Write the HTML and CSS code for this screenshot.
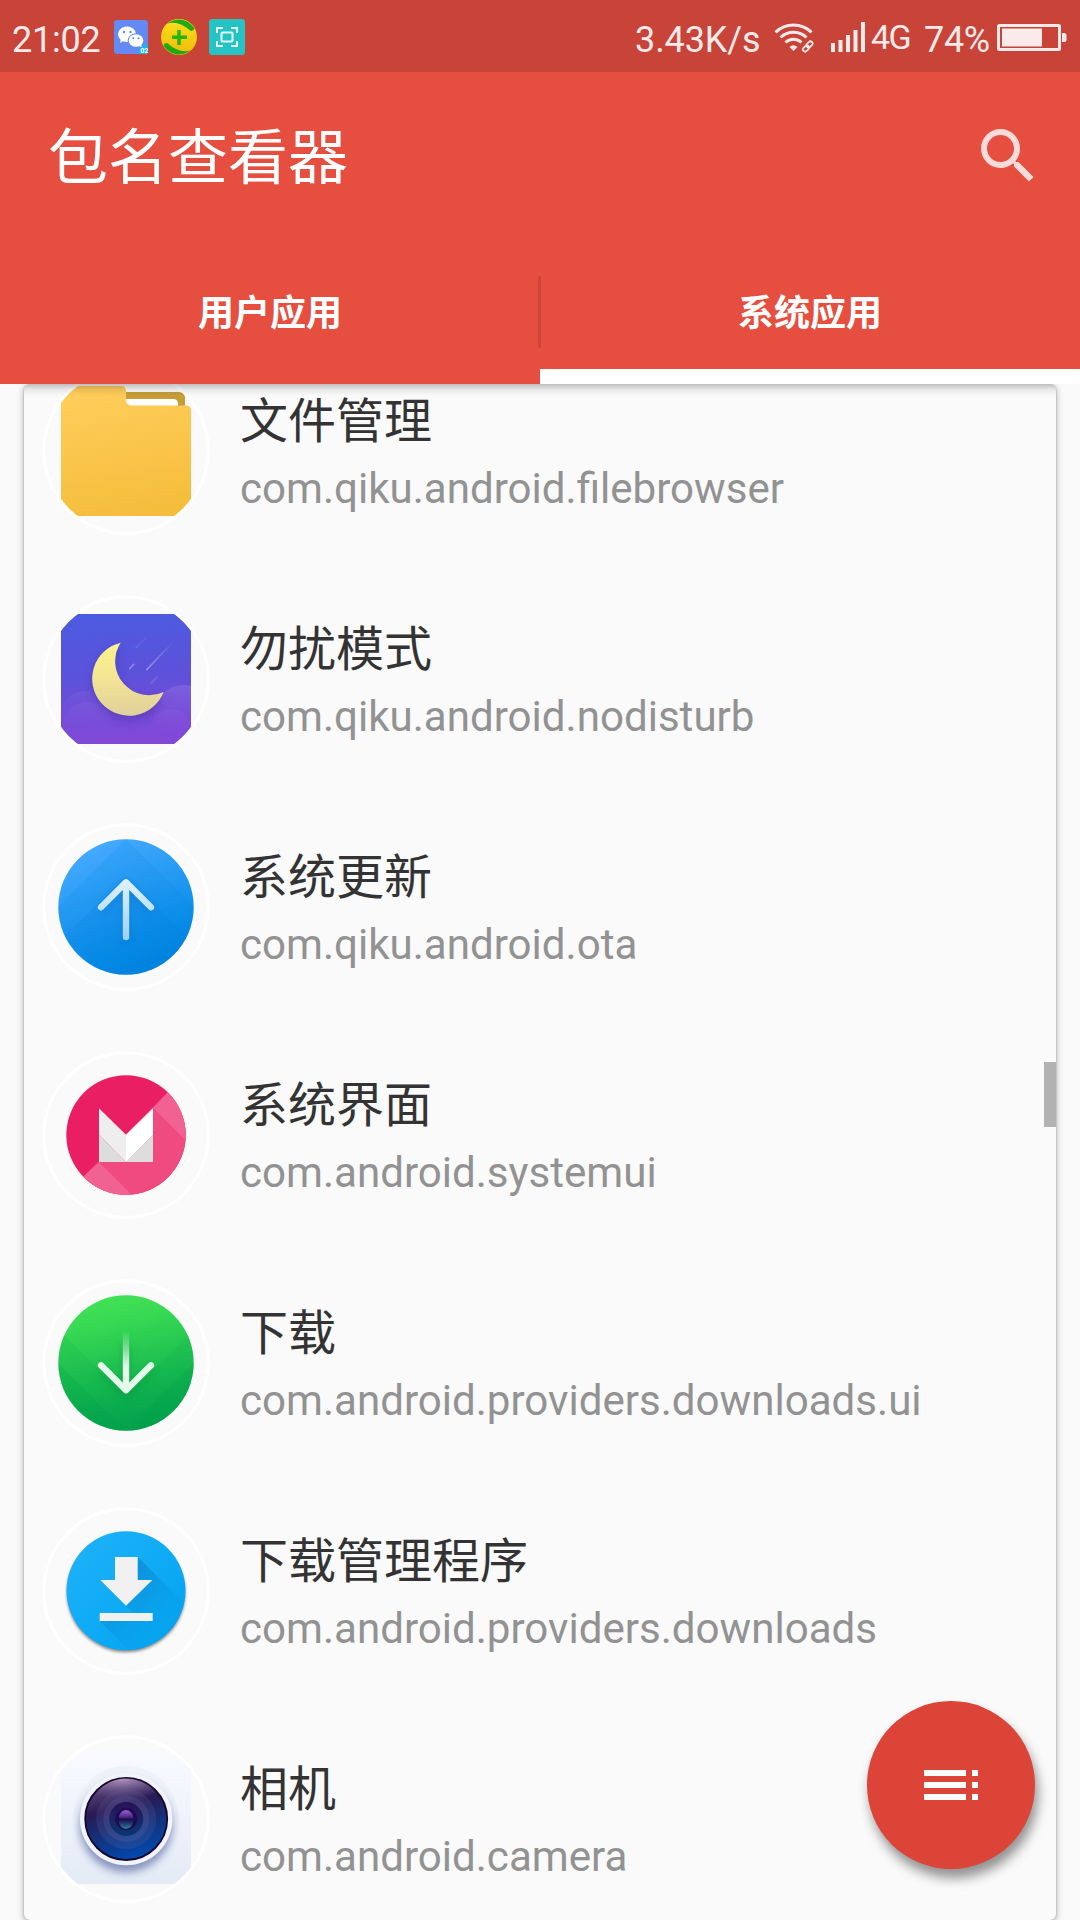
FILE: index.html
```html
<!DOCTYPE html>
<html lang="zh-CN">
<head>
<meta charset="utf-8">
<title>包名查看器</title>
<link rel="stylesheet" href="styles.css">
</head>
<body>
<div class="screen">
  <div class="status">
    <span class="clock">21:02</span>
    <svg class="note-wechat" width="34" height="34" viewBox="0 0 34 34">
      <rect width="34" height="34" rx="3" fill="#6389f2"/>
      <path d="M7 18l-1 5 5-3z" fill="#fff"/><ellipse cx="13" cy="14.3" rx="9" ry="7.7" fill="#fff"/>
      <ellipse cx="22" cy="20.5" rx="8.3" ry="7.2" fill="#6389f2"/><ellipse cx="22" cy="20.5" rx="7.3" ry="6.3" fill="#fff"/><path d="M24 25l4 3-1-5z" fill="#fff"/>
      <g fill="#6389f2"><circle cx="10" cy="12" r="1.2"/><circle cx="16.5" cy="12" r="1.2"/><circle cx="19.3" cy="18.3" r="1"/><circle cx="24.5" cy="18.3" r="1"/></g>
      <path d="M24 34a10 10 0 0 1 10-10v8a2 2 0 0 1-2 2z" fill="#19b7ee"/>
      <text x="26.3" y="33" font-size="7" class="badge-text">02</text>
    </svg>
    <svg class="note-360" width="36" height="36" viewBox="0 0 36 36">
      <defs><linearGradient id="gold" x1="0" y1="0" x2="0" y2="1"><stop offset="0" stop-color="#fbe01c"/><stop offset="1" stop-color="#f0b90a"/></linearGradient></defs>
      <circle cx="18" cy="18" r="18" fill="url(#gold)"/>
      <path d="M6 5A18 18 0 0 1 33.500 9.500Q32 13 29 11.500C22 5 13 2 6 5z" fill="#1cab12"/>
      <path d="M30 31A18 18 0 0 1 2.500 26.500Q4 23 7 24.500C14 31 23 34 30 31z" fill="#1cab12"/>
      <path d="M18 11v15M11 18.300h15" stroke="#25b50a" stroke-width="3.500"/>
    </svg>
    <svg class="note-scan" width="36" height="36" viewBox="0 0 36 36">
      <rect width="36" height="36" rx="3" fill="#23c4c3"/>
      <g fill="none" stroke="#eafafa" stroke-width="2"><path d="M8 14V9h6M22 9h6v5M28 22v5h-6M14 27H8v-5"/><rect x="12.500" y="13.500" width="11" height="9" rx="1"/></g>
    </svg>
    <span class="speed">3.43K/s</span>
    <svg class="wifi" width="40" height="32" viewBox="0 0 40 32" fill="none" stroke="currentColor" stroke-width="3">
      <path d="M1.500 11.300A26 26 0 0 1 37.500 11.300M6.500 16.500A19 19 0 0 1 32.500 16.500M11.500 21.500A11.500 11.500 0 0 1 27.500 21.500"/>
      <path d="M15.500 26Q19.500 22.500 23.500 26L19.500 30z" fill="currentColor" stroke="none"/>
      <g stroke-width="1.700"><rect x="-3.500" y="-2.200" width="7" height="4.400" rx="2.200" transform="translate(32 27.500) rotate(-45)"/><rect x="-3.500" y="-2.200" width="7" height="4.400" rx="2.200" transform="translate(35.500 23.500) rotate(-45)"/></g>
    </svg>
    <svg class="bars" width="34" height="30" viewBox="0 0 34 30" fill="currentColor"><path d="M0 21h4v9H0zM7.500 18h4v12h-4zM15 13h4v17h-4zM22.500 8h4v22h-4zM30 0h4v30h-4z"/></svg>
    <span class="net">4G</span>
    <span class="percent">74%</span>
    <svg class="battery" width="70" height="27" viewBox="0 0 70 27"><rect x="1.500" y="1.500" width="61" height="24" rx="1" fill="none" stroke="currentColor" stroke-width="3"/><rect x="5" y="4.500" width="40" height="18" fill="currentColor"/><path d="M65 9h2q2.500 0 2.500 2.500v4q0 2.500-2.500 2.500h-2z" fill="currentColor"/></svg>
  </div>

  <header class="toolbar">
    <h1 class="title">包名查看器</h1>
    <svg class="search" width="72" height="72" viewBox="0 0 24 24"><path fill="currentColor" d="M15.500 14h-.790l-.280-.270A6.471 6.471 0 0 0 16 9.500 6.500 6.500 0 1 0 9.500 16c1.610 0 3.090-.590 4.230-1.570l.270.280v.790l5 4.990L20.490 19l-4.990-5zm-6 0C7.010 14 5 11.990 5 9.500S7.010 5 9.500 5 14 7.010 14 9.500 11.990 14 9.500 14z"/></svg>
  </header>
  <nav class="tabs">
    <div class="tab">用户应用</div>
    <div class="divider"></div>
    <div class="tab active">系统应用</div>
  </nav>

  <main class="content">
    <div class="card"><div class="viewport">
      <ul class="list">
        <li class="row">
          <svg class="icon" viewBox="0 0 168 168">
            <defs><clipPath id="round"><circle cx="84" cy="84" r="81.300"/></clipPath>
            <linearGradient id="folder" x1=".4" y1="0" x2=".6" y2="1"><stop offset="0" stop-color="#ffcd5a"/><stop offset="1" stop-color="#f4bd3b"/></linearGradient></defs>
            <g clip-path="url(#round)">
              <path d="M80 25h57q6 0 6 6v12H80z" fill="#c69d37"/><path d="M80 32h51q5 0 5 5v6H80z" fill="#fff"/>
              <path d="M19 19h60q5 0 5 5v8.500q0 6 6 6h54q5 0 5 5V149H19z" fill="url(#folder)"/>
            </g>
            <circle class="ring" cx="84" cy="84" r="82.300"/>
          </svg>
          <div class="text"><div class="name">文件管理</div><div class="pkg">com.qiku.android.filebrowser</div></div>
        </li>
        <li class="row">
          <svg class="icon" viewBox="0 0 168 168">
            <defs><linearGradient id="night" x1="0" y1="0" x2="0.100" y2="1"><stop offset="0" stop-color="#4a5ce2"/><stop offset=".5" stop-color="#5c52da"/><stop offset="1" stop-color="#8148d7"/></linearGradient>
            <linearGradient id="moon" x1="0" y1="0" x2="0" y2="1"><stop offset="0" stop-color="#fef48a"/><stop offset=".45" stop-color="#f4e593"/><stop offset="1" stop-color="#e0d09c"/></linearGradient>
            <linearGradient id="cloud" x1="0" y1="0" x2="0" y2="1"><stop offset="0" stop-color="#a07ee5" stop-opacity=".5"/><stop offset=".8" stop-color="#8b4bdb" stop-opacity="0"/></linearGradient>
            <linearGradient id="streak" gradientUnits="userSpaceOnUse" x1="104" y1="75" x2="132" y2="46"><stop offset="0" stop-color="#fff" stop-opacity=".4"/><stop offset="1" stop-color="#fff" stop-opacity="0"/></linearGradient>
            <clipPath id="square"><rect x="19" y="19" width="130" height="130"/></clipPath>
            <filter id="soft" x="-30%" y="-30%" width="160%" height="160%"><feGaussianBlur stdDeviation="4"/></filter></defs>
            <g clip-path="url(#round)"><g clip-path="url(#square)">
              <rect x="19" y="19" width="130" height="130" fill="url(#night)"/>
              <circle cx="43" cy="120" r="24" fill="url(#cloud)" opacity=".3"/><circle cx="141" cy="119" r="29" fill="url(#cloud)" opacity=".75"/>
              <circle cx="46" cy="133" r="26" fill="url(#cloud)" opacity=".3"/><circle cx="129" cy="134" r="20" fill="url(#cloud)" opacity=".3"/>
              <g stroke="url(#streak)" stroke-width="1.600" stroke-linecap="round"><path d="M104.700 74.700 132 46"/><path d="M94 52.700 104 42.700M109 88.300l6-6" opacity=".35"/><path d="M87.700 73.700l4-4.400" opacity=".8"/></g>
              <path d="M78.700 47.700A37 37 0 1 0 121.700 97A34 34 0 0 1 78.700 47.700z" transform="translate(0 4)" fill="#342990" opacity=".35" filter="url(#soft)"/>
              <path d="M78.700 47.700A37 37 0 1 0 121.700 97A34 34 0 0 1 78.700 47.700z" fill="url(#moon)"/>
            </g></g>
            <circle class="ring" cx="84" cy="84" r="82.300"/>
          </svg>
          <div class="text"><div class="name">勿扰模式</div><div class="pkg">com.qiku.android.nodisturb</div></div>
        </li>
        <li class="row">
          <svg class="icon" viewBox="0 0 168 168">
            <defs><linearGradient id="blue" x1=".2" y1=".08" x2=".6" y2="1"><stop offset="0" stop-color="#45a9ff"/><stop offset=".75" stop-color="#0b8ee9"/><stop offset="1" stop-color="#0084e0"/></linearGradient>
            <linearGradient id="up" gradientUnits="userSpaceOnUse" x1="0" y1="56" x2="0" y2="117"><stop offset="0" stop-color="#e2f3ff"/><stop offset="1" stop-color="#9ad0f6"/></linearGradient>
            <clipPath id="disc"><circle cx="84" cy="84" r="67.700"/></clipPath></defs>
            <g clip-path="url(#disc)"><rect x="16" y="16" width="136" height="136" fill="url(#blue)"/>
              <path d="M84 16 16 84V180H152V84z" fill="#0084e2" opacity=".13"/><path d="M84 52 16 120V180H152V120z" fill="#0079d8" opacity=".13"/>
              <path d="M84 63V118M59 88 84 63 109 88" fill="none" stroke="#005fb5" stroke-width="7" opacity=".3" filter="url(#soft)"/></g>
            <path d="M59 84.300 84 59.300 109 84.300M84 60V114" fill="none" stroke="url(#up)" stroke-width="6.400" stroke-linecap="round" stroke-linejoin="round"/>
            <circle class="ring" cx="84" cy="84" r="82.300"/>
          </svg>
          <div class="text"><div class="name">系统更新</div><div class="pkg">com.qiku.android.ota</div></div>
        </li>
        <li class="row">
          <svg class="icon" viewBox="0 0 168 168">
            <defs><clipPath id="small"><circle cx="84" cy="84" r="59.700"/></clipPath></defs>
            <g clip-path="url(#small)"><rect x="24" y="24" width="120" height="120" fill="#e91e63"/>
              <path d="M144 23 23 144H150V23z" fill="#ef4b81"/><path d="M126.300 40.700 111.300 57 146 91.500V40zM57 111 40 127V150H96z" fill="#f16292"/></g>
            <path d="M57 83.700V111H111V83.700L84 111z" fill="#ddd"/><path d="M57 57.300 84 83.700V111L57 83.700z" fill="#eee"/><path d="M111 57.300 84 83.700V111L111 83.700z" fill="#fff"/>
            <circle class="ring" cx="84" cy="84" r="82.300"/>
          </svg>
          <div class="text"><div class="name">系统界面</div><div class="pkg">com.android.systemui</div></div>
        </li>
        <li class="row">
          <svg class="icon" viewBox="0 0 168 168">
            <defs><linearGradient id="green" x1=".4" y1="0" x2=".6" y2="1"><stop offset="0" stop-color="#42e256"/><stop offset=".2" stop-color="#37d853"/><stop offset=".8" stop-color="#0bae50"/><stop offset="1" stop-color="#00a34c"/></linearGradient>
            <linearGradient id="stem" gradientUnits="userSpaceOnUse" x1="0" y1="52" x2="0" y2="88"><stop offset="0" stop-color="#e6fbec" stop-opacity="0"/><stop offset="1" stop-color="#e6fbec"/></linearGradient></defs>
            <g clip-path="url(#disc)"><rect x="16" y="16" width="136" height="136" fill="url(#green)"/>
              <path d="M16 84 84 152 152 84V152H16z" fill="#009447" opacity=".16"/><path d="M16 50 84 118 152 50V152H16z" fill="#00a040" opacity=".1"/>
              <path d="M84 65V115M59 90 84 115 109 90" fill="none" stroke="#007c37" stroke-width="7" opacity=".35" filter="url(#soft)"/></g>
            <rect x="80.800" y="52" width="6.400" height="58" fill="url(#stem)"/>
            <path d="M59 86.300 84 111.300 109 86.300" fill="none" stroke="#e2fbeb" stroke-width="6.400" stroke-linecap="round" stroke-linejoin="round"/>
            <circle class="ring" cx="84" cy="84" r="82.300"/>
          </svg>
          <div class="text"><div class="name">下载</div><div class="pkg">com.android.providers.downloads.ui</div></div>
        </li>
        <li class="row">
          <svg class="icon" viewBox="0 0 168 168">
            <defs><linearGradient id="sky" x1="0" y1="0" x2="1" y2="1"><stop offset="0" stop-color="#20b3fa"/><stop offset="1" stop-color="#00a2f0"/></linearGradient>
            <linearGradient id="long" gradientUnits="userSpaceOnUse" x1="80" y1="75" x2="120" y2="120"><stop offset="0" stop-color="#0c86cc" stop-opacity=".65"/><stop offset="1" stop-color="#08a0ea" stop-opacity=".3"/></linearGradient>
            <clipPath id="dm"><circle cx="84" cy="83.700" r="59.500"/></clipPath>
            <filter id="edge" x="-20%" y="-20%" width="140%" height="140%"><feGaussianBlur stdDeviation="1.500"/></filter></defs>
            <circle cx="84" cy="86" r="59.200" fill="#000" opacity=".45" filter="url(#edge)"/>
            <g clip-path="url(#dm)"><rect x="24" y="24" width="120" height="120" fill="url(#sky)"/>
              <path d="M95.700 50 160 114V170H113.700L57.700 114H90V105L84 98.700z" fill="url(#long)"/></g>
            <path d="M73 50H95.700V73H110.300L84 98.700 58.300 73H73zM57.700 106H110.700V114H57.700z" fill="#f1f1f1"/>
            <circle class="ring" cx="84" cy="84" r="82.300"/>
          </svg>
          <div class="text"><div class="name">下载管理程序</div><div class="pkg">com.android.providers.downloads</div></div>
        </li>
        <li class="row">
          <svg class="icon" viewBox="0 0 168 168">
            <defs><linearGradient id="plate" x1="0" y1="0" x2="0" y2="1"><stop offset="0" stop-color="#f8faff"/><stop offset="1" stop-color="#e4ebf6"/></linearGradient>
            <linearGradient id="lens" x1=".3" y1="0" x2=".6" y2="1"><stop offset="0" stop-color="#685080"/><stop offset=".35" stop-color="#291a55"/><stop offset=".65" stop-color="#12337d"/><stop offset="1" stop-color="#004bb0"/></linearGradient>
            <radialGradient id="gloss" cx=".45" cy="0" r=".75"><stop offset="0" stop-color="#c9a9cf" stop-opacity=".8"/><stop offset="1" stop-color="#80699d" stop-opacity="0"/></radialGradient>
            <linearGradient id="iris" x1="0" y1="0" x2="0" y2="1"><stop offset="0" stop-color="#a660d8"/><stop offset=".35" stop-color="#4f2c89"/><stop offset=".5" stop-color="#1b0b4f"/><stop offset="1" stop-color="#2c80a0"/></linearGradient>
            <linearGradient id="pupil" x1="0" y1="0" x2="0" y2="1"><stop offset="0" stop-color="#2a1057"/><stop offset="1" stop-color="#0a3871"/></linearGradient></defs>
            <g clip-path="url(#round)"><g clip-path="url(#square)">
              <rect x="19" y="19" width="130" height="130" fill="url(#plate)"/>
              <circle cx="84" cy="84" r="53" fill="#e6ebf3" opacity=".45"/>
              <circle cx="84" cy="91" r="46" fill="#50609c" opacity=".65" filter="url(#soft)"/></g></g>
            <circle cx="84.200" cy="84" r="46.200" fill="#f0f3f7"/>
            <circle cx="84.200" cy="84" r="41" fill="url(#lens)" stroke="#15062f" stroke-width="1.800"/>
            <path d="M47 70A39.500 39.500 0 0 1 120 66Q90 62 47 70z" fill="url(#gloss)"/>
            <circle cx="84.200" cy="84" r="30" fill="#6d70ac" opacity=".18"/><circle cx="84.200" cy="84" r="23" fill="#757cb5" opacity=".18"/>
            <circle cx="84.200" cy="84" r="17" fill="url(#pupil)"/><circle cx="84.200" cy="84" r="11" fill="#1c0c4d"/>
            <ellipse cx="84" cy="84.500" rx="7.500" ry="9.500" fill="url(#iris)"/>
            <circle class="ring" cx="84" cy="84" r="82.300"/>
          </svg>
          <div class="text"><div class="name">相机</div><div class="pkg">com.android.camera</div></div>
        </li>
      </ul>
      <div class="top-shade"></div>
      <div class="scrollbar"></div>
    </div></div>
  </main>

  <button class="fab" aria-label="菜单">
    <svg width="72" height="72" viewBox="0 0 24 24" fill="#fff"><path d="M3 7h14v2H3zM3 11h14v2H3zM3 15h14v2H3zM19 7h2v2h-2zM19 11h2v2h-2zM19 15h2v2h-2z"/></svg>
  </button>
</div>
</body>
</html>
```
FILE: styles.css
```css
* { box-sizing: border-box; }

body {
  margin: 0;
  background: #fafafa;
  font-family: Roboto, "Noto Sans CJK SC", sans-serif;
}

.screen {
  position: relative;
  display: flex;
  flex-direction: column;
  width: 1080px;
  height: 1920px;
  overflow: hidden;
}

.status {
  display: flex;
  align-items: center;
  flex: none;
  height: 72px;
  padding: 2px 12px 0 12px;
  background: #c84338;
  color: #fbeaea;
  font-size: 36px;
  line-height: 72px;
  white-space: nowrap;
}
.status svg { flex: none; }
.clock { width: 102px; padding-top: 5px; letter-spacing: -0.2px; }
.note-wechat { margin-right: 13px; }
.note-360 { margin-right: 12px; }
.badge-text { fill: #fff; font-weight: 700; }
.speed { margin-left: auto; width: 139px; padding-top: 5px; letter-spacing: -0.1px; }
.wifi { margin-right: 17px; }
.bars { margin-right: 6px; }
.net { width: 53px; font-size: 34px; letter-spacing: -1.5px; }
.percent { width: 73px; padding-top: 5px; letter-spacing: -0.3px; }
.battery { margin-right: 1px; }

.toolbar {
  display: flex;
  align-items: center;
  justify-content: space-between;
  flex: none;
  height: 168px;
  padding: 0 36px 0 48px;
  background: #e64e40;
  color: #fff;
}
.title { margin: 0; padding-top: 5px; font-size: 60px; font-weight: 400; line-height: 84px; }
.search { color: rgba(255, 255, 255, 0.8); }

.tabs {
  display: flex;
  align-items: center;
  flex: none;
  height: 144px;
  background: #e64e40;
}
.tab {
  flex: 1;
  height: 144px;
  border-bottom: 15px solid transparent;
  color: #fff;
  font-size: 36px;
  font-weight: 700;
  line-height: 148px;
  text-align: center;
}
.tab.active { border-bottom-color: #fff; }
.divider { width: 3px; height: 72px; margin: 0 -1px 0 -2px; background: #cf4539; z-index: 1; }

.content { flex: 1; min-height: 0; padding: 0 24px; overflow: hidden; }
.card {
  height: 1536px;
  border-radius: 6px;
  background: #fafafa;
  box-shadow: 0 2px 7px rgba(0, 0, 0, 0.32), 0 0 2px rgba(0, 0, 0, 0.25);
}
.viewport { position: relative; height: 100%; border-radius: 6px; overflow: hidden; }
.list { margin: -47px 0 0; padding: 0; list-style: none; }
.row { display: flex; align-items: center; gap: 30px; height: 228px; padding-left: 18px; }
.icon { flex: none; width: 168px; height: 168px; }
.ring { fill: none; stroke: #fff; stroke-width: 3px; }
.text { padding-top: 5px; }
.name { color: #333; font-size: 48px; line-height: 70px; }
.pkg { color: #929292; font-size: 42.1px; line-height: 64px; }

.top-shade {
  position: absolute;
  inset: 0 0 auto;
  height: 12px;
  background: linear-gradient(rgba(0, 0, 0, 0.24), rgba(0, 0, 0, 0.08) 45%, transparent);
}
.scrollbar { position: absolute; top: 678px; right: 0; width: 12px; height: 65px; background: #b2b2b2; }

.fab {
  position: absolute;
  left: 867px;
  top: 1701px;
  display: flex;
  align-items: center;
  justify-content: center;
  width: 168px;
  height: 168px;
  padding: 0;
  border: 0;
  border-radius: 50%;
  background: #db4437;
  box-shadow: 3px 9px 12px rgba(0, 0, 0, 0.42);
}
```
